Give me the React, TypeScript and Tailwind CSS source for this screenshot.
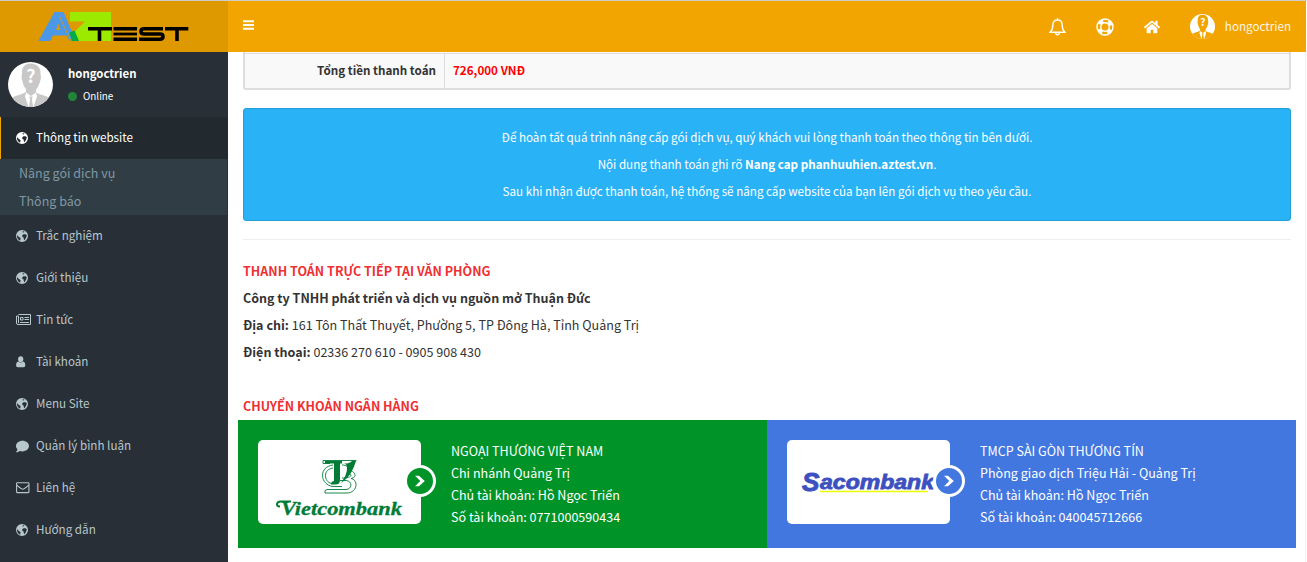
import { FaComment, FaHome } from "react-icons/fa";
import type { ReactNode } from "react";

function Earth() {
  return (
    <svg viewBox="0 0 12 12" className="size-[12px] fill-current">
      <path
        fillRule="evenodd"
        d="M6 0a6 6 0 1 1 0 12a6 6 0 1 1 0-12zM6.300 1.400L8.300 1.200 8 2.200 6.900 2.600zM6.300 5.200L7.500 4.300 9.600 4.300 10.800 5.300 10.300 7.200 9 9.600 8.200 10.300 7.700 8.800 7.700 7.500 6.300 6.900zM1 5L2.300 6.600 3.400 7.200 4.600 8.300 4.100 10.700 2.300 9.500 1.100 7.300z"
      />
    </svg>
  );
}

function Person() {
  return (
    <svg viewBox="0 0 10 12" className="h-3 w-[10px] fill-current">
      <ellipse cx="4.700" cy="3.300" rx="2.600" ry="3" />
      <path d="M2.300 5.600C.7 6 .1 7.500.1 9.300.1 10.600.8 11.300 1.800 11.300h5.800c1 0 1.700-.7 1.700-2 0-1.800-.6-3.300-2.200-3.700-1.500 1.300-3.300 1.300-4.800 0z" />
    </svg>
  );
}

function Newspaper() {
  return (
    <svg viewBox="0 0 15 12" className="h-[12px] w-[15px] shrink-0" fill="none" stroke="currentColor">
      <path d="M2.500 .5h12v10h-12.500a1.500 1.500 0 0 1-1.500-1.500v-7h2v7M8.500 3.500h4.500M8.500 5.500h4.500M4 8.500h9" />
      <path d="M4.500 3.500h2.500v2.500h-2.500z" />
    </svg>
  );
}

function Envelope() {
  return (
    <svg viewBox="0 0 14 12" className="h-[12px] w-[14px]" fill="none" stroke="currentColor" strokeWidth="1.1">
      <rect x=".6" y=".8" width="12.300" height="9.800" rx=".5" />
      <path d="M.8 3.200C3 5 5.500 7.300 6.750 7.300S10.500 5 12.700 3.200" />
    </svg>
  );
}

function Row({ icon, children }: { icon: ReactNode; children: ReactNode }) {
  return (
    <li className="flex h-[42px] items-center pl-4 text-[#b8c7ce]">
      <span className="flex w-5 items-center">{icon}</span>
      <span className="pb-[2px]">{children}</span>
    </li>
  );
}

function Avatar({ className, bg, fg }: { className: string; bg: string; fg: string }) {
  return (
    <svg viewBox="0 0 45 45" className={className}>
      <clipPath id="face">
        <circle cx="22.500" cy="22.500" r="22.500" />
      </clipPath>
      <g clipPath="url(#face)">
        <rect width="45" height="45" fill={bg} />
        <path fill={fg} d="M14 10C14 4 18 1.500 23 1.500S32.500 5 32.500 11c0 3 1 4 0 7-1 3-2 7-4.500 9.500v3L31 32c6 2 10 3 13 5v8H1v-8c3-2 7-3 13-5l4-2v-3c-2.500-2.500-3-6-4-9-.8-3 0-4 0-8z" />
        <path fill={bg} d="M18 30.500l5 3.500 5-3.500 1 4L25.500 45h-5L17 34.500z" />
        <path fill={fg} d="M21.300 34.500h3.400l-.8 3 1.300 7.500h-4.400l1.300-7.500z" />
      </g>
      <text x="23" y="21" textAnchor="middle" fill={bg} fontSize="18" className="font-['Noto_Sans_CJK_SC',sans-serif] font-bold">?</text>
    </svg>
  );
}

function AzLogo() {
  return (
    <svg viewBox="0 0 152 32" className="h-8 w-[152px]">
      <path fill="#9cea00" d="M32 0h41v29H36l-3-6L47 9.500H32z" />
      <path fill="#4a98e6" fillRule="evenodd" d="M.3 29L16.500 0h9L34 20 41 29h-9L28.500 23.500H15L12 29zM18 18h4.500L20.500 12z" />
      <path stroke="#df9900" strokeWidth=".8" d="M21 3.500L33 29" />
      <path fill="#00aa45" d="M31.500 20.500L36.500 18.500 41 29h-7z" />
      <g fill="none" stroke="#000" strokeWidth="3.600">
        <path d="M50 16.800h24M61.500 16v13M127 16.800h23.300M139 16v13" />
        <path d="M75.500 16.800h23.500M75.500 27.200h23.500M125 16.800h-19q-3 0-3 2.600t3 2.600h16q3 0 3 2.600t-3 2.600h-21" />
        <path strokeWidth="2.800" d="M75.500 22h23.500" />
      </g>
    </svg>
  );
}

function VcbLogo() {
  return (
    <svg viewBox="0 0 163 84" className="h-[84px] w-[163px]">
      <g fill="none" stroke="#007c37" strokeWidth=".9">
        <path d="M65 20.500h33.500M65 20.500v3h7M75 25c-7 1-10.500 5-10.500 10.500S69 46 75 46.500M75 28c-5 1-7.500 3.500-7.500 7.500s2 7 6 8M84 25c5 0 6 2 6 4M91 30.500c4 .5 6 2.500 6 5 0 1.500-2 2.500-4 3 3 .5 5 3 5 6 0 5-4 8.500-9 8.500H67q-1-3 2-3.500h19c6 0 7-8.500 0-9h-6M88 34c3-.5 5 0 5 1.500s-4 2.500-9 2.500M84 46.500H75" />
      </g>
      <path fill="#007c37" d="M67 21h17v2.500h-2V40c0 3-1.500 4.500-4.500 4.500H73c0-2 .5-3 3-3.500V23.500h-9zM98 21C95 30 92 37 83 43c4-6 6-10 6-15 0-3-1-4-3-4.500 4 0 6-.5 8-2.500z" />
      <path fill="none" stroke="#007c37" strokeWidth="2" d="M33 61.500H23q-4 0-4 3 0 2 3 2" />
      <text x="23" y="74.500" fill="#007c37" stroke="#007c37" strokeWidth=".3" fontSize="19" textLength="121" lengthAdjust="spacingAndGlyphs" className="font-['Liberation_Serif',serif] font-bold italic">Vietcombank</text>
    </svg>
  );
}

function SacomLogo() {
  return (
    <svg viewBox="0 0 163 84" className="h-[84px] w-[163px]">
      <text x="15" y="51" fill="#3d50bf" stroke="#3d50bf" strokeWidth="1" fontSize="26" className="font-['Liberation_Sans',sans-serif] font-bold italic">S</text>
      <text x="33" y="48.500" fill="#3d50bf" stroke="#3d50bf" strokeWidth=".8" fontSize="19.500" textLength="114" lengthAdjust="spacingAndGlyphs" className="font-['Liberation_Sans',sans-serif] font-bold italic">acombank</text>
      <path stroke="#eaff00" strokeWidth="1.300" d="M33 51.500h108" />
    </svg>
  );
}

function Bank({ logo, color, lines }: { logo: ReactNode; color: string; lines: string[] }) {
  return (
    <section className={"flex h-32 w-[529px] p-5 text-white " + color}>
      <div className="relative h-[84px] w-[163px] rounded-[5px] bg-white">
        {logo}
        <div className={"absolute top-[25px] left-[146px] grid size-8 place-items-center rounded-full border-[3px] border-white " + color}>
          <svg viewBox="0 0 12 12" className="size-3" fill="white">
            <path d="M1 .8h4L10.800 6 5 11.200H1L6.300 6z" />
          </svg>
        </div>
      </div>
      <div className="pl-[30px] text-[12.55px] leading-[22px]">
        {lines.map((line) => (
          <p key={line}>{line}</p>
        ))}
      </div>
    </section>
  );
}

export default function App() {
  return (
    <div className="flex h-[562px] flex-col overflow-hidden border-t border-[#ccc] bg-white font-['Noto_Sans_CJK_SC','Noto_Sans',sans-serif] text-[11.65px] text-[#333]">
      <header className="flex h-[51px] w-[1306px] shrink-0 bg-[#f2a500] text-white">
        <div className="w-[228px] bg-[#df9900] pt-[11px] pl-[38px]">
          <AzLogo />
        </div>
        <svg viewBox="0 0 11 10" className="mt-[19px] ml-[15px] h-[10px] w-[11px]" fill="#fff">
          <path d="M0 .3h11v1.900H0zM0 4h11v1.900H0zM0 7.800h11v1.900H0z" />
        </svg>
        <div className="ml-auto flex items-center pr-[15px]">
          <svg viewBox="0 0 16 17" className="mr-[30px] h-[18px] w-[17px]" fill="none" stroke="white" strokeWidth="1.300">
            <path d="M8 .3v1.400M1 13.400C3 11.600 3.600 9.500 3.600 6.500 3.600 3.500 5.200 1.900 8 1.900s4.400 1.600 4.400 4.600c0 3 .6 5.100 2.600 6.900zM6.300 14c0 2.500 3.400 2.500 3.400 0" />
          </svg>
          <svg viewBox="0 0 18 18" className="mr-[30px] size-[18px]" fill="none" stroke="white">
            <circle cx="9" cy="9" r="8" strokeWidth="1.400" />
            <circle cx="9" cy="9" r="4.200" strokeWidth="1.400" />
            <circle cx="9" cy="9" r="6.200" strokeWidth="3.800" strokeDasharray="4.600 5.140" strokeDashoffset="-2.570" />
          </svg>
          <FaHome className="mr-[30px] size-4" />
          <Avatar className="size-[25px]" bg="#fff" fg="#f2a500" />
          <span className="ml-[10px] pb-px opacity-90">hongoctrien</span>
        </div>
      </header>
      <div className="flex min-h-0 flex-1">
        <aside className="w-[228px] shrink-0 bg-[#282f36]">
          <div className="flex h-[65px] pt-[10px] pl-2">
            <Avatar className="size-[45px]" bg="#fff" fg="#c8c8c8" />
            <div className="pl-[15px] text-white">
              <p className="mt-px h-5 text-[11.4px] leading-5 font-bold">hongoctrien</p>
              <div className="mt-[3px] flex items-center text-[9.87px] leading-5">
                <i className="mr-[6px] size-[9px] rounded-full bg-[#22863a]" />
                Online
              </div>
            </div>
          </div>
          <div className="flex h-[42px] items-center border-l border-[#f2a500] bg-[#232a2f] pl-[15px] text-white">
            <span className="w-5"><Earth /></span>
            <span className="pb-[2px]">Thông tin website</span>
          </div>
          <div className="mr-px h-14 bg-[#303d44] pl-[19px] text-[12.5px] leading-7 text-[#8098a5]">
            <p>Nâng gói dịch vụ</p>
            <p>Thông báo</p>
          </div>
          <ul>
            <Row icon={<Earth />}>Trắc nghiệm</Row>
            <Row icon={<Earth />}>Giới thiệu</Row>
            <Row icon={<Newspaper />}>Tin tức</Row>
            <Row icon={<Person />}>Tài khoản</Row>
            <Row icon={<Earth />}>Menu Site</Row>
            <Row icon={<FaComment className="size-[13px]" />}>Quản lý bình luận</Row>
            <Row icon={<Envelope />}>Liên hệ</Row>
            <Row icon={<Earth />}>Hướng dẫn</Row>
          </ul>
        </aside>
        <main className="w-[1078px] shrink-0 border-r border-[#f0f0f0] px-[15px]">
          <div className="flex h-[38px] w-[1048px] rounded-b-[3px] border-x-2 border-b-2 border-[#ddd] bg-[#f9f9f9] pt-px">
            <div className="w-[200px] border-t border-r border-[#ddd] pr-2 text-right leading-[32px] font-bold">Tổng tiền thanh toán</div>
            <div className="flex-1 border-t border-[#ddd] pl-2 leading-[32px] font-bold text-[#ff0000]">726,000 VNĐ</div>
          </div>
          <div className="mt-[18px] h-[113px] w-[1048px] rounded-[3px] border border-[#209fd8] bg-[#29b2f6] pt-[14px] text-center leading-[27px] text-white">
            <p>Để hoàn tất quá trình nâng cấp gói dịch vụ, quý khách vui lòng thanh toán theo thông tin bên dưới.</p>
            <p>Nội dung thanh toán ghi rõ <b>Nang cap phanhuuhien.aztest.vn</b>.</p>
            <p>Sau khi nhận được thanh toán, hệ thống sẽ nâng cấp website của bạn lên gói dịch vụ theo yêu cầu.</p>
          </div>
          <hr className="mt-[18px] w-[1048px] border-[#eee]" />
          <div className="mt-[17px] pb-px text-[12.55px] leading-[27px]">
            <p className="text-[12.5px] font-bold text-[#ee3033]">THANH TOÁN TRỰC TIẾP TẠI VĂN PHÒNG</p>
            <p className="text-[12.5px] font-bold">Công ty TNHH phát triển và dịch vụ nguồn mở Thuận Đức</p>
            <p><b>Địa chỉ:</b> 161 Tôn Thất Thuyết, Phường 5, TP Đông Hà, Tỉnh Quảng Trị</p>
            <p><b>Điện thoại:</b> 02336 270 610 - 0905 908 430</p>
            <p className="mt-[27px] text-[12.5px] font-bold text-[#ee3033]">CHUYỂN KHOẢN NGÂN HÀNG</p>
          </div>
          <div className="-ml-[5px] flex w-[1058px]">
            <Bank logo={<VcbLogo />} color="bg-[#009428]" lines={["NGOẠI THƯƠNG VIỆT NAM", "Chi nhánh Quảng Trị", "Chủ tài khoản: Hồ Ngọc Triển", "Số tài khoản: 0771000590434"]} />
            <Bank logo={<SacomLogo />} color="bg-[#4277e0]" lines={["TMCP SÀI GÒN THƯƠNG TÍN", "Phòng giao dịch Triệu Hải - Quảng Trị", "Chủ tài khoản: Hồ Ngọc Triển", "Số tài khoản: 040045712666"]} />
          </div>
        </main>
      </div>
    </div>
  );
}
